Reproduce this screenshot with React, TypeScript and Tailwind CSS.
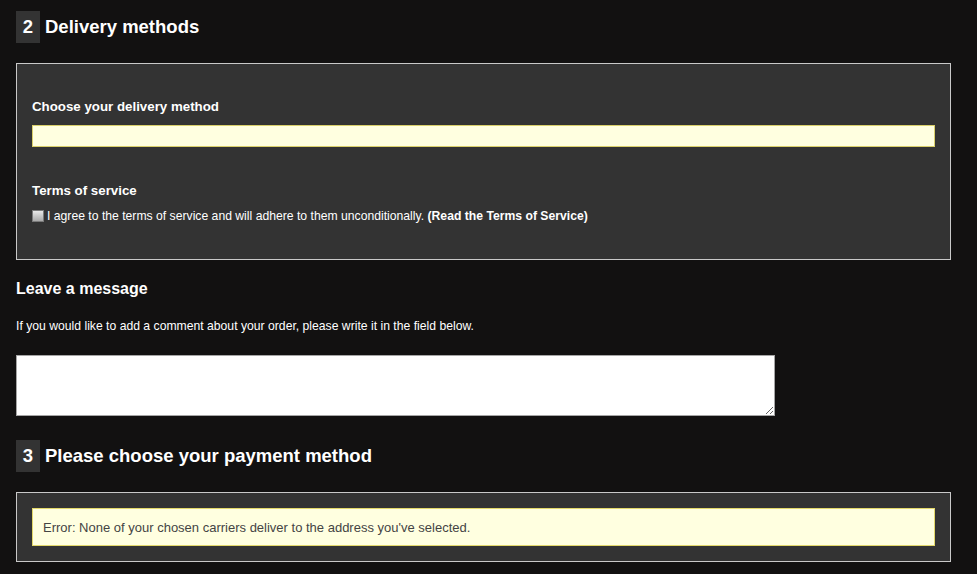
export default function App() {
  return (
    <div className="min-h-[574px] bg-[#121111] text-white font-['Liberation_Sans',Arial,sans-serif] overflow-hidden">
      <div className="ml-4 w-[935px] pt-[11px] pb-[12px]">
        {/* ── Step 2 ───────────────────────────── */}
        <StepHeading num="2" title="Delivery methods" />

        <div className="mt-5 border border-[#c9c9c9] bg-[#333333] px-[15px] pt-[35px] pb-[36px]">
          <h3 className="text-[13.3px] leading-[15px] font-bold">Choose your delivery method</h3>
          <div className="mt-[11px] h-[22px] border border-[#d9cf6a] bg-[#ffffe0]" />

          <h3 className="mt-[36px] text-[13.3px] leading-[15px] font-bold">Terms of service</h3>
          <label className="mt-[11px] flex items-center gap-[3px] text-[12.2px] leading-[14px]">
            <span className="inline-block h-[12px] w-[12px] border border-[#7a7a7a] bg-gradient-to-b from-[#e8e8e8] to-[#a9a9a9]" />
            <span>
              I agree to the terms of service and will adhere to them unconditionally.{" "}
              <b>(Read the Terms of Service)</b>
            </span>
          </label>
        </div>

        {/* ── Message ──────────────────────────── */}
        <h3 className="mt-5 text-[16px] leading-[18px] font-bold">Leave a message</h3>
        <p className="mt-[21px] text-[12.2px] leading-[14px]">
          If you would like to add a comment about your order, please write it in the field below.
        </p>
        <textarea
          className="mt-[22px] block h-[61px] w-[759px] border border-[#a5a5a5] bg-white text-black text-[12px] outline-none"
          defaultValue=""
        />

        {/* ── Step 3 ───────────────────────────── */}
        <div className="mt-[24px]">
          <StepHeading num="3" title="Please choose your payment method" />
        </div>

        <div className="mt-5 border border-[#c9c9c9] bg-[#333333] p-[15px]">
          <div className="flex h-[38px] items-center border border-[#e3d86a] bg-[#ffffe0] px-[10px] text-[13px] leading-[15px] text-[#444444]">
            Error: None of your chosen carriers deliver to the address you've selected.
          </div>
        </div>
      </div>
    </div>
  );
}

function StepHeading({ num, title }: { num: string; title: string }) {
  return (
    <h2 className="flex items-center gap-[5px] text-[18.5px] font-bold">
      <span className="flex h-[32px] w-[24px] items-center justify-center bg-[#333333]">{num}</span>
      <span>{title}</span>
    </h2>
  );
}
